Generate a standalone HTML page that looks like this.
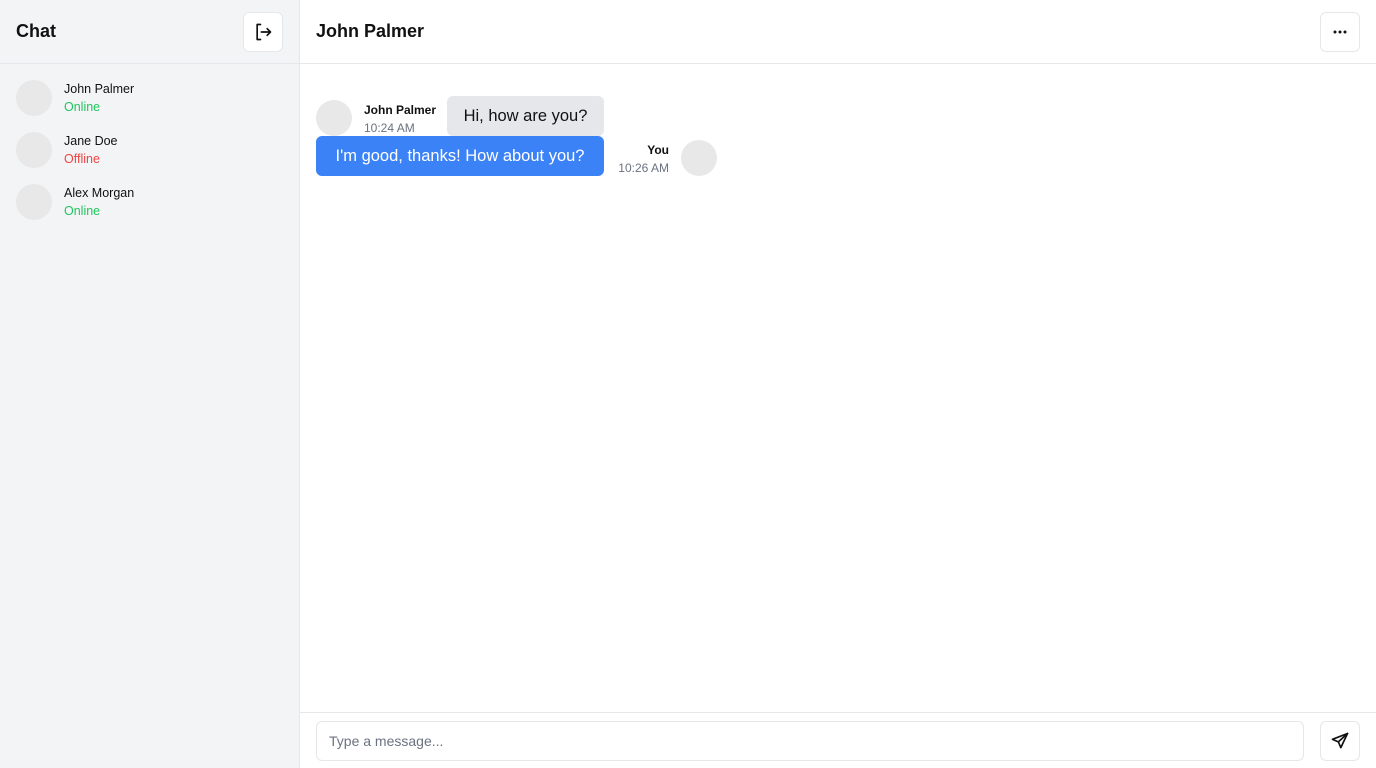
<!DOCTYPE html>
<html><head><meta charset="utf-8"><style>
*{box-sizing:border-box;margin:0;padding:0}
body{width:1376px;height:768px;overflow:hidden;font-family:"Liberation Sans",sans-serif;color:#111;background:#fff;position:relative}
.side{position:absolute;left:0;top:0;width:300px;height:768px;background:#f3f4f6;border-right:1px solid #e5e7eb}
.sh{height:64px;border-bottom:1px solid #e5e7eb;position:relative}
.sh h1{position:absolute;left:16px;top:21px;font-size:18px;font-weight:bold}
.btn{position:absolute;width:40px;height:40px;background:#fff;border:1px solid #e5e7eb;border-radius:6px;display:flex;align-items:center;justify-content:center}
.av{position:absolute;width:36px;height:36px;border-radius:50%;background:#e8e8e8}
.c{position:absolute;left:64px;font-size:12.5px}
.c .s{margin-top:4px}
.main{position:absolute;left:300px;top:0;right:0;height:768px}
.mh{height:64px;border-bottom:1px solid #e5e7eb;position:relative}
.mh h2{position:absolute;left:16px;top:21px;font-size:18px;font-weight:bold}
.t{position:absolute;font-size:12px}
.g{color:#6b7280}
.bub{position:absolute;height:40px;border-radius:6px;font-size:16.5px;line-height:40px;text-align:center}
.foot{position:absolute;left:0;right:0;top:712px;bottom:0;border-top:1px solid #e5e7eb}
.inp{position:absolute;left:16px;top:8px;width:988px;height:40px;border:1px solid #e5e7eb;border-radius:6px;font-size:14px;color:#6b7280;padding:11px 12px}
</style></head><body>
<div class="side">
<div class="sh"><h1>Chat</h1>
<div class="btn" style="left:243px;top:12px"><svg width="20" height="20" viewBox="0 0 24 24" fill="none" stroke="#111" stroke-width="2" stroke-linecap="round" stroke-linejoin="round"><path d="M9 3H5v18h4"/><path d="M10 12h11M17 8l4 4-4 4"/></svg></div></div>
<div class="av" style="left:16px;top:80px"></div><div class="c" style="top:82px">John Palmer<div class="s" style="color:#22c55e">Online</div></div>
<div class="av" style="left:16px;top:132px"></div><div class="c" style="top:134px">Jane Doe<div class="s" style="color:#ef4444">Offline</div></div>
<div class="av" style="left:16px;top:184px"></div><div class="c" style="top:186px">Alex Morgan<div class="s" style="color:#22c55e">Online</div></div>
</div>
<div class="main">
<div class="mh"><h2>John Palmer</h2>
<div class="btn" style="left:1020px;top:12px"><svg width="20" height="20" viewBox="0 0 24 24" fill="#111"><circle cx="6" cy="12" r="1.8"/><circle cx="12" cy="12" r="1.8"/><circle cx="18" cy="12" r="1.8"/></svg></div></div>
<div class="av" style="left:16px;top:100px"></div>
<div class="t" style="left:64px;top:103px;font-weight:bold">John Palmer</div>
<div class="t g" style="left:64px;top:121px">10:24 AM</div>
<div class="bub" style="left:147px;top:96px;width:157px;background:#e5e7eb">Hi, how are you?</div>
<div class="bub" style="left:16px;top:136px;width:288px;background:#3b82f6;color:#fff">I'm good, thanks! How about you?</div>
<div class="t" style="right:707px;top:143px;font-weight:bold">You</div>
<div class="t g" style="right:707px;top:161px">10:26 AM</div>
<div class="av" style="left:381px;top:140px"></div>
<div class="foot"><div class="inp">Type a message...</div>
<div class="btn" style="left:1020px;top:8px"><svg width="20" height="20" viewBox="0 0 24 24" fill="none" stroke="#111" stroke-width="2" stroke-linejoin="round" stroke-linecap="round"><path d="M21 3L3 10l7 3 3 7z"/><path d="M10 13l11-10"/></svg></div></div>
</div>
</body></html>
